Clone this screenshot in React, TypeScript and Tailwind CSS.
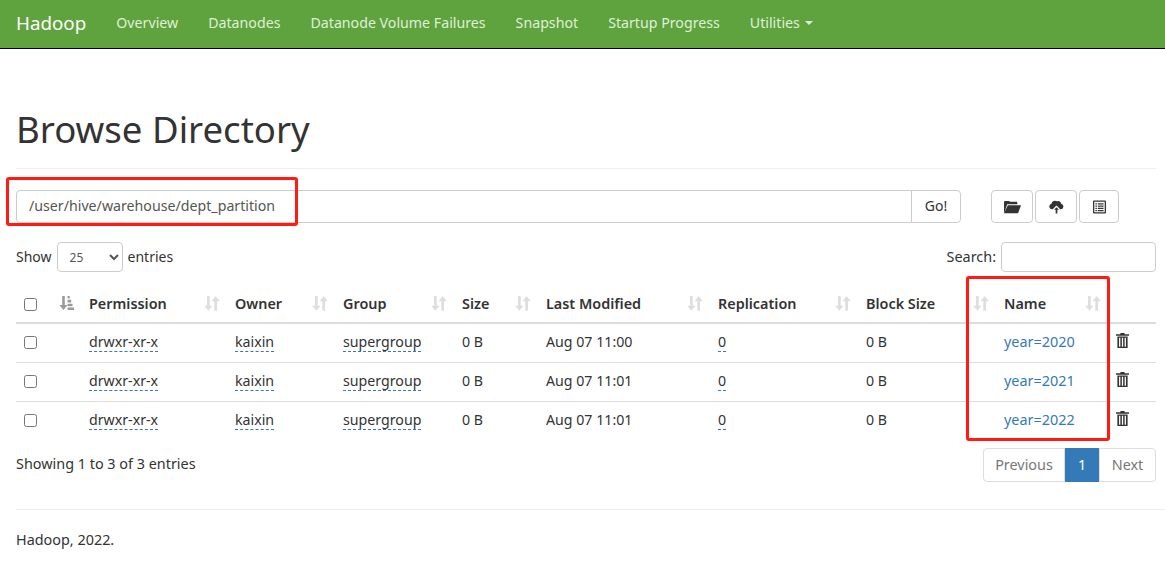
const navItems = ["Overview", "Datanodes", "Datanode Volume Failures", "Snapshot", "Startup Progress"];

const columns = [
  { label: "Permission", width: "w-[146px]" },
  { label: "Owner", width: "w-[108px]" },
  { label: "Group", width: "w-[119px]" },
  { label: "Size", width: "w-[84px]" },
  { label: "Last Modified", width: "w-[172px]" },
  { label: "Replication", width: "w-[148px]" },
  { label: "Block Size", width: "w-[138px]" },
  { label: "Name", width: "w-[112px]" },
];

const rows = [
  { modified: "Aug 07 11:00", name: "year=2020" },
  { modified: "Aug 07 11:01", name: "year=2021" },
  { modified: "Aug 07 11:01", name: "year=2022" },
];

function SortIcon({ active = false }: { active?: boolean }) {
  if (active) {
    return (
      <svg viewBox="0 0 14 14" className="h-[15px] w-[15px] fill-[#9a9a9a]">
        <path d="M3 0h2.400v8.500H8L4.200 13 .4 8.500H3z" />
        <path d="M8 0h2v2.400H8zM8 3.600h3.400V6H8zM8 7.200h4.600v2.400H8zM8 10.800H14V13H8z" />
      </svg>
    );
  }
  return (
    <svg viewBox="0 0 14 14" className="h-[16px] w-[16px] fill-[#dedede]">
      <path d="M2.600 0H5v8.500h2.400L3.800 13 .2 8.500h2.400z" />
      <path d="M9 13h2.400V4.500h2.400L10.200 0 6.600 4.500H9z" />
    </svg>
  );
}

function FolderIcon() {
  return (
    <svg viewBox="0 0 18 14" className="h-[14px] w-[18px] fill-[#333]">
      <path d="M1 12.500V2.200C1 1.500 1.500 1 2.200 1h3.600c.5 0 .9.3 1.100.8h6.400c.6 0 1 .4 1 1V4.300H4.200L1.400 12.500z" />
      <path d="M4.900 5.300H18l-3 8H.9z" />
    </svg>
  );
}

function CloudIcon() {
  return (
    <svg viewBox="0 0 16 15" className="h-[15px] w-[15px] fill-[#333]">
      <path d="M4 10.500H3a3 3 0 0 1-.4-5.900A3.900 3.900 0 0 1 8.500 2 3.200 3.200 0 0 1 13 4.600a3 3 0 0 1-.2 5.900h-1L8 6.500z" />
      <path d="M8 6.800l4.200 4.400H9.600V15H6.400v-3.800H3.800z" className="fill-white" />
      <path d="M8 8.200l2.600 2.800H8.900V15H7.100v-4H5.400z" />
    </svg>
  );
}

function ListIcon() {
  return (
    <svg viewBox="0 0 14 14" className="h-[14px] w-[13px] fill-[#333]">
      <path d="M1 0h12a1 1 0 0 1 1 1v12a1 1 0 0 1-1 1H1a1 1 0 0 1-1-1V1a1 1 0 0 1 1-1zm.4 1.400v11.200h11.200V1.400z" fillRule="evenodd" />
      <path d="M2.600 3h1.600v1.400H2.600zM5.200 3h6.200v1.400H5.200zM2.600 5.400h1.600v1.400H2.600zM5.200 5.400h6.200v1.400H5.200zM2.600 7.800h1.600v1.400H2.600zM5.200 7.800h6.200v1.400H5.200zM2.600 10.200h1.600v1.400H2.600zM5.200 10.200h6.200v1.400H5.200z" />
    </svg>
  );
}

function TrashIcon() {
  return (
    <svg viewBox="0 0 14 16" className="h-[15px] w-[13px] fill-[#333]">
      <path d="M5 0h4l.5 1.400H14v1.400H0V1.400h4.500z" />
      <path d="M1.500 3.800h11V16h-11zM3.300 5v9.800h1.400V5zM6.300 5v9.800h1.400V5zM9.300 5v9.800h1.400V5z" fillRule="evenodd" />
    </svg>
  );
}

function Editable({ children }: { children: string }) {
  return <span className="border-b border-dashed border-[#337ab7]">{children}</span>;
}

function Row({ modified, name }: { modified: string; name: string }) {
  return (
    <tr className="h-[39px] border-b border-[#ddd] text-[14.200px] last:border-b-0">
      <td className="pl-2">
        <input type="checkbox" className="block h-[13px] w-[13px]" />
      </td>
      <td />
      <td className="pb-[2px] pl-2"><Editable>drwxr-xr-x</Editable></td>
      <td className="pb-[2px] pl-2"><Editable>kaixin</Editable></td>
      <td className="pb-[2px] pl-2"><Editable>supergroup</Editable></td>
      <td className="pb-[2px] pl-2">0 B</td>
      <td className="pb-[2px] pl-2">{modified}</td>
      <td className="pb-[2px] pl-2"><Editable>0</Editable></td>
      <td className="pb-[2px] pl-2">0 B</td>
      <td className="pb-[2px] pl-2"><a className="text-[14.400px] text-[#337ab7]">{name}</a></td>
      <td className="pb-[4px] pl-2"><TrashIcon /></td>
    </tr>
  );
}

export default function App() {
  return (
    <div className="relative min-h-[562px] overflow-hidden bg-white font-['Noto_Sans','Open_Sans',sans-serif] text-[14.400px] leading-[20px] text-[#333]">
      <nav className="flex h-[49px] items-center border-b border-black bg-[#5fa33e] px-4 pb-[2px] text-[14.200px]">
        <span className="mr-[15px] text-[18.800px] text-white">Hadoop</span>
        {navItems.map((item) => (
          <a key={item} className="px-[15px] text-[#dff0d8]">{item}</a>
        ))}
        <a className="flex items-center gap-[5px] px-[15px] text-[#dff0d8]">
          Utilities
          <span className="h-0 w-0 border-x-4 border-t-4 border-x-transparent border-t-[#dff0d8]" />
        </a>
      </nav>

      <main className="pr-[9px] pl-4">
        <h1 className="mt-[54px] border-b border-[#eee] pb-[13px] text-[36.600px] leading-[52px] font-normal">
          Browse Directory
        </h1>

        <div className="mt-[21px] flex items-start">
          <div className="flex h-[33px] w-[945px]">
            <input
              readOnly
              value="/user/hive/warehouse/dept_partition"
              className="min-w-0 flex-1 rounded-l border border-[#ccc] px-3 pb-[2px] text-[14.200px] text-[#555]"
            />
            <button className="-ml-px w-[50px] rounded-r border border-[#ccc] bg-white pb-[2px] text-[14px]">Go!</button>
          </div>
          <div className="ml-[30px] flex gap-[2px]">
            <button className="flex h-[33px] w-[42px] items-center justify-center rounded border border-[#ccc]"><FolderIcon /></button>
            <button className="flex h-[33px] w-[42px] items-center justify-center rounded border border-[#ccc]"><CloudIcon /></button>
            <button className="flex h-[33px] w-[40px] items-center justify-center rounded border border-[#ccc]"><ListIcon /></button>
          </div>
        </div>

        <div className="mt-[19px] flex h-[30px] items-center">
          <span className="text-[14px]">Show</span>
          <select className="mx-[5px] h-[30px] w-[66px] rounded border border-[#ccc] bg-white pl-2 text-[12px] text-[#555]">
            <option>25</option>
          </select>
          <span className="text-[14px]">entries</span>
          <span className="ml-auto">Search:</span>
          <input className="ml-[5px] h-[30px] w-[155px] rounded border border-[#ccc]" />
        </div>

        <table className="mt-[15px] w-[1140px] table-fixed border-collapse">
          <thead>
            <tr className="h-[36px] border-b-2 border-[#ddd] text-left">
              <th className="w-[35px] pl-2 font-normal">
                <input type="checkbox" className="block h-[13px] w-[13px]" />
              </th>
              <th className="w-[30px] pb-[3px] pl-2"><SortIcon active /></th>
              {columns.map((col) => (
                <th key={col.label} className={`${col.width} pb-[2px] pl-2`}>
                  <div className="flex items-center justify-between pr-[7px] font-semibold">
                    {col.label}
                    <SortIcon />
                  </div>
                </th>
              ))}
              <th />
            </tr>
          </thead>
          <tbody>
            {rows.map((row) => (
              <Row key={row.name} {...row} />
            ))}
          </tbody>
        </table>

        <div className="mt-[8px] flex items-start justify-between">
          <span className="mt-[6px]">Showing 1 to 3 of 3 entries</span>
          <div className="flex h-[34px]">
            <a className="flex w-[82px] items-center justify-center rounded-l border border-[#ddd] text-[#777]">Previous</a>
            <a className="flex w-[34px] items-center justify-center bg-[#337ab7] text-white">1</a>
            <a className="flex w-[57px] items-center justify-center rounded-r border border-[#ddd] text-[#777]">Next</a>
          </div>
        </div>

        <footer className="mt-[27px] -mr-[9px] border-t border-[#eee] pt-[20px]">Hadoop, 2022.</footer>
      </main>

      <div className="absolute top-[177px] left-[6px] h-[49px] w-[292px] rounded-[3px] border-[3px] border-[#ff1a12]" />
      <div className="absolute top-[276px] left-[966px] h-[165px] w-[144px] rounded-[3px] border-[3px] border-[#ff1a12]" />
    </div>
  );
}
